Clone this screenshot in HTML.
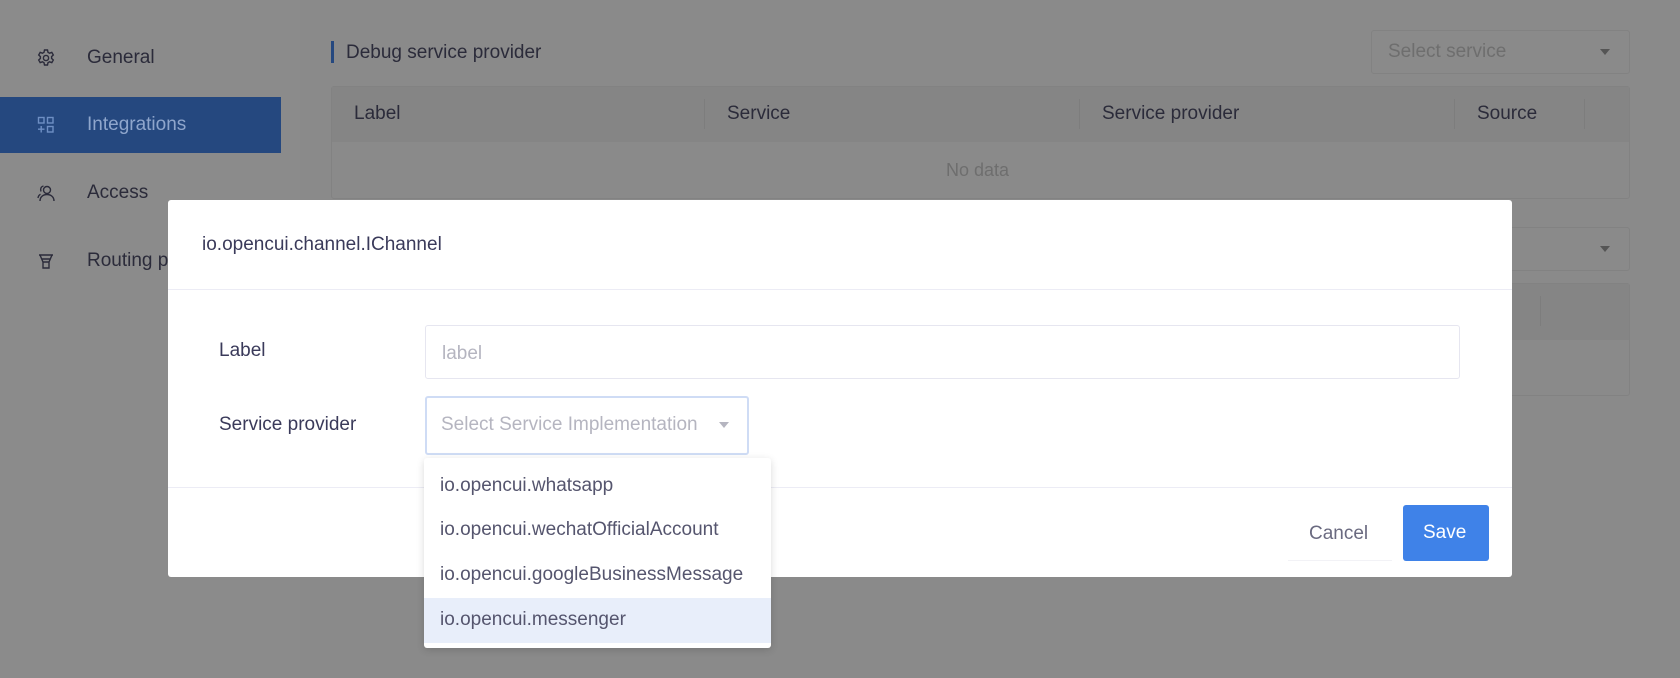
<!DOCTYPE html>
<html><head><meta charset="utf-8"><style>
*{box-sizing:border-box;margin:0;padding:0}
body{width:1680px;height:678px;overflow:hidden;background:#8a8a8a;font-family:"Liberation Sans",Arial,sans-serif;position:relative;color:#2b2b3a}
.a{position:absolute}
.t{font-size:19px;white-space:nowrap;line-height:1}
.side{left:0;top:0;width:300px;height:678px;background:#8b8b8b}
.ico{width:20px;height:20px}
</style></head><body>
<div class="a side"></div>
<svg class="a ico" style="left:36px;top:48px" viewBox="0 0 20 20" fill="none" stroke="#2b2b3a" stroke-width="1.4"><path d="M8.5 2h3l.5 2.3 1.6.9 2.2-.8 1.5 2.6-1.7 1.6v1.8l1.7 1.6-1.5 2.6-2.2-.8-1.6.9-.5 2.3h-3l-.5-2.3-1.6-.9-2.2.8-1.5-2.6 1.7-1.6V8.6L2.7 7l1.5-2.6 2.2.8L8 4.3z"/><circle cx="10" cy="10" r="2.6"/></svg>
<div class="a t" style="left:87px;top:48px">General</div>
<div class="a" style="left:0;top:97px;width:281px;height:56px;background:#25487f"></div>
<svg class="a ico" style="left:36px;top:115px" viewBox="0 0 20 20" fill="none" stroke="#6e8fc4" stroke-width="1.4"><rect x="2.5" y="2.5" width="5.5" height="5.5"/><rect x="11.5" y="2.5" width="5.5" height="5.5"/><rect x="11.5" y="11.5" width="5.5" height="5.5"/><path d="M5.2 11v6.5M2 14.2h6.5"/></svg>
<div class="a t" style="left:87px;top:115px;color:#8fa6cc">Integrations</div>
<svg class="a ico" style="left:36px;top:183px" viewBox="0 0 20 20" fill="none" stroke="#2b2b3a" stroke-width="1.4"><circle cx="11" cy="7" r="3.5"/><path d="M4 18c0-4 3-6.5 7-6.5s7 2.5 7 6.5M7.5 3C5 3.5 4 6 5 8.5M2 15c.3-2 1.3-3.2 2.5-3.8"/></svg>
<div class="a t" style="left:87px;top:183px">Access</div>
<svg class="a ico" style="left:36px;top:251px" viewBox="0 0 20 20" fill="none" stroke="#2b2b3a" stroke-width="1.4"><path d="M3 4h14M4 4l3 7h6l3-7M7 11v6h6v-6M6 8h8"/></svg>
<div class="a t" style="left:87px;top:251px">Routing p</div>
<div class="a" style="left:331px;top:41px;width:3px;height:22px;background:#25487f"></div>
<div class="a t" style="left:346px;top:43px">Debug service provider</div>
<div class="a" style="left:1371px;top:30px;width:259px;height:44px;border:1px solid #828282;border-radius:3px"></div>
<div class="a t" style="left:1388px;top:42px;color:#6e6e6e">Select service</div>
<div class="a" style="left:1600px;top:49px;border:5px solid transparent;border-top:6px solid #555"></div>
<div class="a" style="left:331px;top:86px;width:1299px;height:113px;border:1px solid #828282;border-radius:3px"></div>
<div class="a" style="left:332px;top:87px;width:1297px;height:55px;background:#858585"></div>
<div class="a t" style="left:354px;top:104px">Label</div>
<div class="a t" style="left:727px;top:104px">Service</div>
<div class="a t" style="left:1102px;top:104px">Service provider</div>
<div class="a t" style="left:1477px;top:104px">Source</div>
<div class="a" style="left:704px;top:99px;width:1px;height:30px;background:#7d7d7d"></div>
<div class="a" style="left:1079px;top:99px;width:1px;height:30px;background:#7d7d7d"></div>
<div class="a" style="left:1454px;top:99px;width:1px;height:30px;background:#7d7d7d"></div>
<div class="a" style="left:1584px;top:99px;width:1px;height:30px;background:#7d7d7d"></div>
<div class="a t" style="left:946px;top:161px;color:#6e6e6e;font-size:18px">No data</div>
<div class="a" style="left:1371px;top:227px;width:259px;height:44px;border:1px solid #828282;border-radius:3px"></div>
<div class="a" style="left:1600px;top:246px;border:5px solid transparent;border-top:6px solid #555"></div>
<div class="a" style="left:1371px;top:283px;width:259px;height:113px;border:1px solid #828282;border-radius:3px"></div>
<div class="a" style="left:1372px;top:284px;width:257px;height:56px;background:#858585"></div>
<div class="a" style="left:1540px;top:296px;width:1px;height:30px;background:#7d7d7d"></div>
<div class="a" style="left:168px;top:200px;width:1344px;height:377px;background:#fff;border-radius:3px"></div>
<div class="a t" style="left:202px;top:235px;color:#3a3a5a">io.opencui.channel.IChannel</div>
<div class="a" style="left:168px;top:289px;width:1344px;height:1px;background:#ececf5"></div>
<div class="a t" style="left:219px;top:341px;color:#3a3a5a">Label</div>
<div class="a" style="left:425px;top:325px;width:1035px;height:54px;border:1px solid #e6e6f0;border-radius:3px"></div>
<div class="a t" style="left:442px;top:344px;color:#b5b5c0">label</div>
<div class="a t" style="left:219px;top:415px;color:#3a3a5a">Service provider</div>
<div class="a" style="left:425px;top:396px;width:324px;height:59px;border:2px solid #cfdcf5;border-radius:3px"></div>
<div class="a t" style="left:441px;top:415px;color:#b5b5c0">Select Service Implementation</div>
<div class="a" style="left:719px;top:422px;border:5px solid transparent;border-top:6px solid #b5b5c0"></div>
<div class="a" style="left:168px;top:487px;width:1344px;height:1px;background:#ececf5"></div>
<div class="a" style="left:1288px;top:505px;width:104px;height:56px;border-bottom:1px solid #f2f2f6"></div>
<div class="a t" style="left:1309px;top:524px;color:#6a6a80">Cancel</div>
<div class="a" style="left:1403px;top:505px;width:86px;height:56px;background:#3f82e8;border-radius:3px"></div>
<div class="a t" style="left:1423px;top:523px;color:#fff">Save</div>
<div class="a" style="left:424px;top:458px;width:347px;height:190px;background:#fff;border-radius:3px;box-shadow:0 2px 8px rgba(0,0,0,.15)"></div>
<div class="a" style="left:424px;top:598px;width:347px;height:45px;background:#e8eefa"></div>
<div class="a t" style="left:440px;top:476px;color:#55556e">io.opencui.whatsapp</div>
<div class="a t" style="left:440px;top:520px;color:#55556e">io.opencui.wechatOfficialAccount</div>
<div class="a t" style="left:440px;top:565px;color:#55556e">io.opencui.googleBusinessMessage</div>
<div class="a t" style="left:440px;top:610px;color:#55556e">io.opencui.messenger</div>
</body></html>
